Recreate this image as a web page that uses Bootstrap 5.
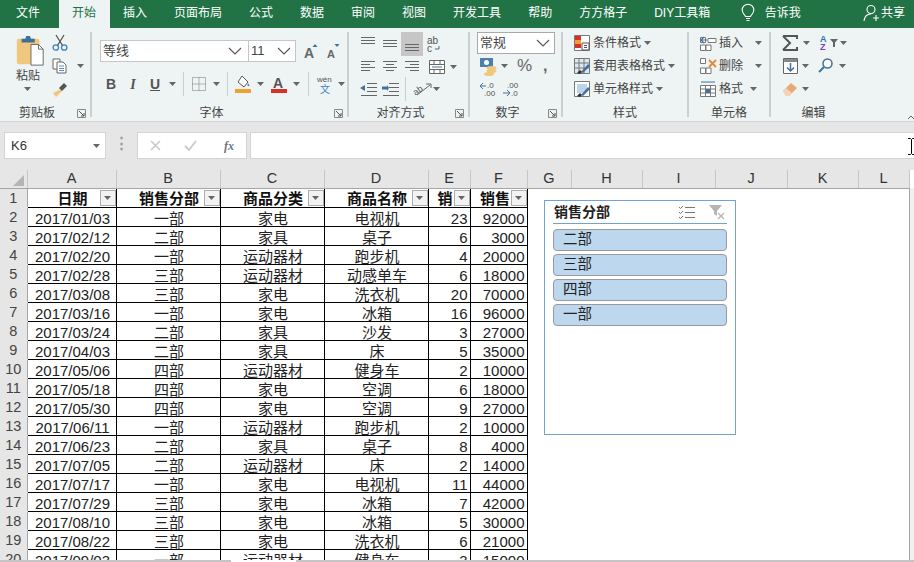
<!DOCTYPE html>
<html lang="zh">
<head>
<meta charset="utf-8">
<title>Excel</title>
<link href="https://cdn.jsdelivr.net/npm/bootstrap@5.3.0/dist/css/bootstrap.min.css" rel="stylesheet">
<style>
html,body{height:562px;overflow:hidden;background:#fff}
body{font-family:"Liberation Sans","Noto Sans CJK SC",sans-serif;font-size:12px;color:#444;width:914px}
svg{display:block;flex:none;overflow:visible}
.xl-tabs{height:28px;background:#217346;color:#fff;padding-left:2.5px}
.xl-tab{padding:0 13.5px;line-height:26px;color:#fff;white-space:nowrap}
.xl-tab.on{background:#eef3f3;color:#217346;margin-left:5px;width:51px;height:28px}
.xl-tell{margin-left:17px;width:106px;height:26px}
.xl-share{margin-left:auto;width:51px;padding-right:8px;height:26px}
.xl-ribbon{height:94px;background:#eef3f3;padding-top:4px;border-bottom:1px solid #d9d3d3;position:relative}
.xl-group{height:85px;border-right:2px solid #cbcfcf;flex:none}
.xl-body{height:74px}
.xl-label{height:12px;line-height:12px;text-align:center;color:#444;margin-top:1px}
.xl-launch{width:16px;padding-left:3px;padding-top:3px}
.g1{width:92px}.g2{width:257px}.g3{width:121px}.g4{width:93px}.g5{width:126px}.g6{width:82px}.g7{width:85px}
.pl8{padding-left:8px}.pl7{padding-left:7px}.pl11{padding-left:11px}
.xl-rows{display:flex;flex-direction:column}
.xl-rowh{height:23px;display:flex;align-items:center}
.up{margin-top:-1px}
.xl-box{height:22px;background:#fff;border:1px solid #c6c6c6;display:flex;align-items:center}
.fontbox{width:149px;padding:0 6px 0 2px;font-size:13px}
.sizebox{width:48px;padding:0 4px 0 2px;font-size:13px;margin-left:-1px}
.numbox{width:78px;padding:0 4px 0 2px;font-size:13px;border-color:#aaa}
.xl-g{width:22px;height:21px;display:flex;align-items:center;justify-content:center;flex:none}
.xl-g.act{background:#c6c6c6;height:24px}
.fw{font-family:"Liberation Serif",serif}
.txtb{font-weight:700;font-size:14px;color:#555}
.txti{font-style:italic;font-size:14px;color:#555;font-family:"Liberation Serif",serif;font-weight:700}
.txtu{font-weight:700;font-size:14px;color:#555;text-decoration:underline}
.vsep{width:1px;height:24px;background:#c9cdcd;flex:none}
.pt8{padding-top:8px}.mt10{margin-top:10px}.mt2{margin-top:2px}.mt5{margin-top:5px}
.s1{margin-left:1px}.s2{margin-left:2px}.s3{margin-left:3px}.s4{margin-left:4px}.s5{margin-left:5px}.s6{margin-left:6px}.s7{margin-left:7px}.s8{margin-left:8px}.s9{margin-left:9px}.s10{margin-left:10px}.s11{margin-left:11px}.s12{margin-left:12px}
.pct{font-size:17px;line-height:20px;color:#666;width:16px}
.cma{font-size:16px;font-weight:700;color:#666;line-height:16px}
.xl-paste{width:36px;padding-left:16px;box-sizing:content-box}
.xl-small{margin-left:-1px}
.xl-fx{height:48px;background:#e6e6e6;padding:10px 0 0 4px}
.xl-fbox{height:27px;background:#fff;border:1px solid #d4d4d4;display:flex;align-items:center;flex:none}
.namebox{width:102px;padding:0 5px 0 6px;font-size:13px;color:#333}
.dots{width:31px;color:#999;font-size:15px;text-align:center;font-weight:700}
.fxbox{width:110px;padding-left:12px;gap:23px}
.inbox{flex:1;margin-left:3px;border-right:0;position:relative}
.beam{position:absolute;right:-1px;top:5px}
.xl-sheet{height:390px;overflow:hidden;position:relative}
.xl-t{table-layout:fixed;border-collapse:collapse;width:909px;font-size:15px;color:#222}
.xl-t td,.xl-t th{height:19px;padding:0;line-height:15px;white-space:nowrap;overflow:hidden}
.c0{width:27px}.ca{width:89px}.cb,.cc,.cd{width:104px}.ce{width:42px}.cf{width:57px}.cg{width:44px}.ch{width:71px}.ci{width:73px}.cj{width:72px}.ck{width:71px}.cl{width:51px}
.xl-t .let{height:18px;line-height:17px;background:#e6e6e6;border-right:1px solid #c6c6c6;border-bottom:1px solid #a5a5a5;font-weight:400;text-align:center;color:#333;font-size:14.5px}
.xl-t .crn{height:18px;background:#e6e6e6;border-right:1px solid #c6c6c6;border-bottom:1px solid #a5a5a5;padding:3px 0 0 13px}
.xl-t .num{background:#e6e6e6;text-align:center;font-weight:400;color:#444;border-bottom:1px solid #e6e6e6;border-right:1px solid #a5a5a5;font-size:14.5px;padding-top:2px}
.xl-t .dat{border:1px solid #000;text-align:center;padding:3px 0 0 2px}
.xl-t .rt{text-align:right;padding:3px 2px 0 0}
.xl-t .hd{border:1px solid #000;font-weight:700;text-align:center;position:relative;color:#111;padding:2px 0 0 2px}
.xl-t .pad10{padding-right:10px}.xl-t .pad9{padding-right:9px}
.blank{background:#fff}
.flt{position:absolute;right:0;top:1px;width:16px;height:16px;background:#f2f2f2;border:1px solid #aeaeae;display:flex;align-items:center;justify-content:center}
.xl-foot{height:2px;background:#c4c4c4;position:relative}
.xl-foot i{display:block;width:65px;height:2px;background:#fff;margin-left:231px}
.xl-sb{position:absolute;left:909px;top:18px;width:5px;bottom:0;background:#f0f0f0;border-left:1px solid #a5a5a5}
.slicer{position:absolute;left:544px;top:30px;width:192px;height:235px;border:1px solid #6ea3d3;border-radius:0;background:#fff;padding:0 8px}
.sl-head{height:23px;border-bottom:1px solid #6ea3d3;font-weight:700;font-size:14px;color:#222;padding-left:1px}
.sl-list{margin-top:5px;gap:3px}
.sl-item{height:22px;background:#bdd7ee;border:1px solid #9a9a9a;border-radius:4px;font-size:14.5px;line-height:19px;color:#222;padding:0 0 0 9px;text-align:left}
.sl-icons{gap:14px;margin-right:2px}
.chev{position:absolute;right:0;bottom:2px}
</style>
</head>
<body>
<svg width="0" height="0" class="position-absolute">
<defs>
<symbol id="car" viewBox="0 0 7 4"><path d="M0 0h7L3.5 4z" fill="#666"/></symbol>
<symbol id="chv" viewBox="0 0 14 8"><path d="M1 1l6 6 6-6" fill="none" stroke="#555" stroke-width="1.1"/></symbol>
<symbol id="lau" viewBox="0 0 9 9"><path d="M.5 8.500v-8h8v8z" fill="none" stroke="#888"/><path d="M2 2l5 5M4 7h3V4" fill="none" stroke="#555"/></symbol>
</defs>
</svg>

<!-- tabs -->
<div class="xl-tabs d-flex align-items-start">
  <div class="xl-tab">文件</div><div class="xl-tab on">开始</div><div class="xl-tab">插入</div><div class="xl-tab">页面布局</div><div class="xl-tab">公式</div><div class="xl-tab">数据</div><div class="xl-tab">审阅</div><div class="xl-tab">视图</div><div class="xl-tab">开发工具</div><div class="xl-tab">帮助</div><div class="xl-tab">方方格子</div><div class="xl-tab">DIY工具箱</div>
  <div class="xl-tell d-flex align-items-center gap-2">
    <svg width="14" height="20" viewBox="0 0 14 20"><path d="M4.500 13.500C3 11 1.200 10 1.200 7a5.800 5.800 0 0 1 11.600 0c0 3-1.800 4-3.300 6.500z" fill="none" stroke="#fff" stroke-width="1.100"/><path d="M5 15.500h4M5.500 17.500h3" stroke="#fff" stroke-width="1.100"/></svg>
    <span class="xl-tab p-0 s2">告诉我</span>
  </div>
  <div class="xl-share d-flex align-items-center">
    <svg width="18" height="18" viewBox="0 0 18 18"><circle cx="8" cy="5.500" r="4" fill="none" stroke="#fff" stroke-width="1.100"/><path d="M1 17c.5-4 3-7 7-7M13 11v6M10 14h6" fill="none" stroke="#fff" stroke-width="1.100"/></svg>
    <span class="xl-tab p-0">共享</span>
  </div>
</div>

<!-- ribbon -->
<div class="xl-ribbon d-flex">
  <!-- clipboard -->
  <div class="xl-group g1">
    <div class="xl-body d-flex">
      <div class="xl-paste xl-rows align-items-start">
        <svg width="29" height="31" viewBox="0 0 29 33" class="mt-1"><rect x="0" y="3" width="24" height="27" rx="2" fill="#efc87d"/><path d="M5 3h4l1-3h4l1 3h4v4H5z" fill="#3f6f9b"/><path d="M15 9h8l5 5v17H15z" fill="#fff" stroke="#666"/><path d="M23 9v5h5" fill="none" stroke="#666"/></svg>
        <span>粘贴</span>
        <svg width="7" height="4" class="s8 mt2"><use href="#car"/></svg>
      </div>
      <div class="xl-small xl-rows">
        <div class="xl-rowh s1 up">
          <svg width="16" height="16" viewBox="0 0 16 16"><circle cx="3.800" cy="12.500" r="2.700" fill="none" stroke="#3f80c0" stroke-width="1.300"/><circle cx="12.200" cy="12.500" r="2.700" fill="none" stroke="#3f80c0" stroke-width="1.300"/><path d="M5.500 10.500L12 0M10.500 10.500L4 0" stroke="#555" stroke-width="1.300"/></svg>
        </div>
        <div class="xl-rowh s1">
          <svg width="16" height="15" viewBox="0 0 16 15"><path d="M1 1h7v10H1z" fill="#fff" stroke="#666"/><path d="M5 4h6l3 3v8H5z" fill="#fff" stroke="#666"/><path d="M7 8h5M7 10.500h5M7 12.500h5" stroke="#5a8ab5"/></svg>
          <svg width="7" height="4" class="s9"><use href="#car"/></svg>
        </div>
        <div class="xl-rowh s1">
          <svg width="16" height="16" viewBox="0 0 16 16"><path d="M9 8L1 12l3 4 6-6z" fill="#efc87d"/><path d="M8 6l4-4 3 3-4 4-1 1-3-3z" fill="#555"/></svg>
        </div>
      </div>
    </div>
    <div class="d-flex"><div class="xl-label flex-grow-1">剪贴板</div><div class="xl-launch"><svg width="9" height="9"><use href="#lau"/></svg></div></div>
  </div>

  <!-- font -->
  <div class="xl-group g2">
    <div class="xl-body pl8 pt8">
      <div class="d-flex align-items-center">
        <div class="xl-box fontbox justify-content-between"><span>等线</span><svg width="14" height="8"><use href="#chv"/></svg></div>
        <div class="xl-box sizebox justify-content-between"><span>11</span><svg width="14" height="8"><use href="#chv"/></svg></div>
        <svg width="16" height="16" viewBox="0 0 16 16" class="s8"><path d="M11 1l2.500 3h-5z" fill="#41719c"/><text x="0" y="15" font-size="14" font-family="Liberation Sans" font-weight="700" fill="#666">A</text></svg>
        <svg width="16" height="16" viewBox="0 0 16 16" class="s6"><path d="M11 4L8.500 1h5z" fill="#41719c"/><text x="1" y="15" font-size="11" font-family="Liberation Sans" font-weight="700" fill="#666">A</text></svg>
      </div>
      <div class="d-flex align-items-center mt10">
        <div class="xl-g txtb">B</div><div class="xl-g txti">I</div><div class="xl-g txtu">U</div>
        <svg width="7" height="4" class="s3"><use href="#car"/></svg>
        <div class="vsep s7"></div>
        <svg width="14" height="14" viewBox="0 0 14 14" class="s8"><path d="M.5.500h13v13H.5zM7 .5v13M.5 7h13" fill="none" stroke="#777" stroke-dasharray="1 1"/></svg>
        <svg width="7" height="4" class="s7"><use href="#car"/></svg>
        <div class="vsep s7"></div>
        <svg width="17" height="18" viewBox="0 0 17 18" class="s7"><path d="M7 1l6 6-4 5-6-5z" fill="#fff" stroke="#555"/><path d="M13 8l1.500 3-2 0z" fill="#41719c"/><rect y="14" width="16" height="4" fill="#f0a030"/></svg>
        <svg width="7" height="4" class="s5"><use href="#car"/></svg>
        <svg width="17" height="18" viewBox="0 0 17 18" class="s7"><text x="2" y="13" font-size="14" font-family="Liberation Sans" font-weight="700" fill="#555">A</text><rect y="14" width="16" height="4" fill="#d9302a"/></svg>
        <svg width="7" height="4" class="s5"><use href="#car"/></svg>
        <div class="vsep s8"></div>
        <svg width="17" height="19" viewBox="0 0 17 19" class="s8"><text x="0" y="7" font-size="8" font-family="Liberation Sans" fill="#555">wén</text><text x="3" y="18" font-size="10" font-family="Noto Sans CJK SC" fill="#3f80c0">文</text></svg>
        <svg width="7" height="4" class="s4"><use href="#car"/></svg>
      </div>
    </div>
    <div class="d-flex"><div class="xl-label flex-grow-1">字体</div><div class="xl-launch"><svg width="9" height="9"><use href="#lau"/></svg></div></div>
  </div>

  <!-- alignment -->
  <div class="xl-group g3">
    <div class="xl-body pl8">
      <div class="d-flex align-items-center">
        <div class="xl-g act bg-transparent"><svg width="15" height="16" viewBox="0 0 15 16"><path d="M0 1.500h14M0 4.500h14M0 7.500h14" stroke="#666"/></svg></div>
        <div class="xl-g act bg-transparent"><svg width="15" height="12" viewBox="0 0 15 12"><path d="M0 2.500h14M0 5.500h14M0 8.500h14" stroke="#666"/></svg></div>
        <div class="xl-g act"><svg width="15" height="16" viewBox="0 0 15 16"><path d="M0 8.500h14M0 11.500h14M0 14.500h14" stroke="#666"/></svg></div>
        <div class="xl-g act bg-transparent"><svg width="16" height="17" viewBox="0 0 16 17"><text x="1" y="8" font-size="10" font-family="Liberation Sans" fill="#555">ab</text><text x="1" y="16" font-size="10" font-family="Liberation Sans" fill="#555">c</text><path d="M13 10v3H9" fill="none" stroke="#41719c"/></svg></div>
      </div>
      <div class="d-flex align-items-center">
        <div class="xl-g"><svg width="15" height="11" viewBox="0 0 15 11"><path d="M0 .500h14M0 3.500h9M0 6.500h14M0 9.500h9" stroke="#666"/></svg></div>
        <div class="xl-g"><svg width="15" height="11" viewBox="0 0 15 11"><path d="M0 .500h14M3 3.500h8M0 6.500h14M3 9.500h8" stroke="#666"/></svg></div>
        <div class="xl-g"><svg width="15" height="11" viewBox="0 0 15 11"><path d="M0 .500h14M5 3.500h9M0 6.500h14M5 9.500h9" stroke="#666"/></svg></div>
        <svg width="16" height="14" viewBox="0 0 16 14" class="s6"><path d="M.5.500h15v13H.5zM.5 4.500h15M.5 9.500h15M5 .5v4M11 .5v4M5 9.500v4M11 9.500v4" fill="#fff" stroke="#666"/><path d="M3 7h10" stroke="#41719c"/></svg>
        <svg width="7" height="4" class="s5"><use href="#car"/></svg>
      </div>
      <div class="d-flex align-items-center">
        <div class="xl-g"><svg width="17" height="13" viewBox="0 0 17 13"><path d="M7 .5h10M7 4.500h10M7 8.500h10M1 12.500h16" stroke="#666"/><path d="M5 2v6L0 5z" fill="#41719c"/></svg></div>
        <div class="xl-g"><svg width="17" height="13" viewBox="0 0 17 13"><path d="M7 .5h10M7 4.500h10M7 8.500h10M1 12.500h16" stroke="#666"/><path d="M0 3.500h5V2l2 3-2 3V6.500H0z" fill="#41719c"/></svg></div>
        <div class="vsep s4"></div>
        <svg width="19" height="16" viewBox="0 0 19 16" class="s6"><text x="0" y="12" font-size="9" font-family="Liberation Sans" fill="#555" transform="rotate(-35 6 8)">ab</text><path d="M5 14L18 4M14 3h5v4" fill="none" stroke="#666"/></svg>
        <svg width="7" height="4" class="s2"><use href="#car"/></svg>
      </div>
    </div>
    <div class="d-flex"><div class="xl-label flex-grow-1">对齐方式</div><div class="xl-launch"><svg width="9" height="9"><use href="#lau"/></svg></div></div>
  </div>

  <!-- number -->
  <div class="xl-group g4">
    <div class="xl-body pl7">
      <div class="xl-box numbox justify-content-between"><span>常规</span><svg width="14" height="8"><use href="#chv"/></svg></div>
      <div class="d-flex align-items-center mt2">
        <svg width="17" height="19" viewBox="0 0 17 19" class="s3"><rect x="0" y="1" width="13" height="9" fill="#4a7fb0"/><circle cx="6.500" cy="5.500" r="2.500" fill="#fff"/><ellipse cx="11.500" cy="11" rx="5" ry="2" fill="#efc87d"/><ellipse cx="11.500" cy="14" rx="5" ry="2" fill="#efc87d"/><ellipse cx="9" cy="17" rx="5" ry="2" fill="#efc87d"/></svg>
        <svg width="7" height="4" class="s4"><use href="#car"/></svg>
        <span class="pct s9">%</span>
        <span class="cma s10">,</span>
      </div>
      <div class="d-flex align-items-center mt5">
        <svg width="16" height="16" viewBox="0 0 16 16" class="s3"><text x="7" y="7" font-size="8" font-family="Liberation Sans" fill="#555">.0</text><text x="4" y="15" font-size="8" font-family="Liberation Sans" fill="#555">.00</text><path d="M0 5h6M3 2L0 5l3 3" fill="none" stroke="#41719c"/></svg>
        <svg width="16" height="16" viewBox="0 0 16 16" class="s7"><text x="4" y="7" font-size="8" font-family="Liberation Sans" fill="#555">.00</text><text x="8" y="15" font-size="8" font-family="Liberation Sans" fill="#555">.0</text><path d="M0 12h6M4 9l3 3-3 3" fill="none" stroke="#41719c"/></svg>
      </div>
    </div>
    <div class="d-flex"><div class="xl-label flex-grow-1">数字</div><div class="xl-launch"><svg width="9" height="9"><use href="#lau"/></svg></div></div>
  </div>

  <!-- styles -->
  <div class="xl-group g5">
    <div class="xl-body xl-rows pl11">
      <div class="xl-rowh up">
        <svg width="16" height="16" viewBox="0 0 16 16"><path d="M.5.500h15v15H.5z" fill="#fff" stroke="#777"/><path d="M1 1h6v4H1zM1 9h6v4H1z" fill="#d9302a"/><path d="M1 5h6v4H1z" fill="#f0a030"/><path d="M8 8h7v7H8z" fill="#fff" stroke="#555"/><path d="M10 10.500h3M10 12.500h3" stroke="#555"/></svg>
        <span class="s3">条件格式</span><svg width="7" height="4" class="s3"><use href="#car"/></svg>
      </div>
      <div class="xl-rowh">
        <svg width="16" height="16" viewBox="0 0 16 16"><path d="M.5.500h15v15H.5zM.5 5h15M.5 10h15M5 .5v15M10 .5v15" fill="#dbe7f1" stroke="#777"/><path d="M7 14l7-8 2 2-7 7z" fill="#41719c"/><path d="M3 15l3-3 2 2-2 2z" fill="#333"/></svg>
        <span class="s3">套用表格格式</span><svg width="7" height="4" class="s3"><use href="#car"/></svg>
      </div>
      <div class="xl-rowh">
        <svg width="16" height="16" viewBox="0 0 16 16"><path d="M.5.500h15v15H.5z" fill="#fff" stroke="#777"/><path d="M3 3h10v9H3z" fill="#bcd4ea"/><path d="M7 14l7-8 2 2-7 7z" fill="#41719c"/><path d="M3 15l3-3 2 2-2 2z" fill="#333"/></svg>
        <span class="s3">单元格样式</span><svg width="7" height="4" class="s3"><use href="#car"/></svg>
      </div>
    </div>
    <div class="xl-label">样式</div>
  </div>

  <!-- cells -->
  <div class="xl-group g6">
    <div class="xl-body xl-rows pl11">
      <div class="xl-rowh up">
        <svg width="17" height="16" viewBox="0 0 17 16"><path d="M.5 2.500h5v5h-5zM.5 10h5v5.500h-5zM6 10h5v5.500H6zM8 3.500h8v4H8z" fill="#fff" stroke="#777"/><path d="M1 5h6M4 2L1 5l3 3" fill="none" stroke="#41719c" stroke-width="1.200"/></svg>
        <span class="s2">插入</span><svg width="7" height="4" class="s12"><use href="#car"/></svg>
      </div>
      <div class="xl-rowh">
        <svg width="17" height="16" viewBox="0 0 17 16"><path d="M.5 .5h5v5h-5zM.5 10h5v5.500h-5zM6 10h5v5.500H6z" fill="#fff" stroke="#777"/><path d="M9 2l7 7M16 2L9 9" stroke="#e08a3c" stroke-width="1.800"/></svg>
        <span class="s2">删除</span><svg width="7" height="4" class="s12"><use href="#car"/></svg>
      </div>
      <div class="xl-rowh">
        <svg width="17" height="16" viewBox="0 0 17 16"><path d="M1 1h14" stroke="#41719c"/><path d="M.5 4.500h15v11H.5zM.5 8h15M.5 12h15M5.500 4.500v11M10.500 4.500v11" fill="#fff" stroke="#777"/><rect x="6" y="8" width="4" height="4" fill="#41719c"/></svg>
        <span class="s2">格式</span><svg width="7" height="4" class="s7"><use href="#car"/></svg>
      </div>
    </div>
    <div class="xl-label">单元格</div>
  </div>

  <!-- editing -->
  <div class="xl-group g7 border-0">
    <div class="xl-body xl-rows pl11">
      <div class="xl-rowh up">
        <svg width="16" height="16" viewBox="0 0 16 16"><path d="M1 1h14v3M1 15h14v-3M1 1l7 7-7 7" fill="none" stroke="#555" stroke-width="2"/></svg>
        <svg width="7" height="4" class="s5"><use href="#car"/></svg>
        <svg width="20" height="17" viewBox="0 0 20 17" class="s9"><text x="1" y="8" font-size="9" font-family="Liberation Sans" font-weight="700" fill="#2e75b6">A</text><text x="1" y="16" font-size="9" font-family="Liberation Sans" font-weight="700" fill="#7e3fc0">Z</text><path d="M11 5h8l-3 3.500V13h-2V8.500z" fill="#666"/></svg>
        <svg width="7" height="4" class="s1"><use href="#car"/></svg>
      </div>
      <div class="xl-rowh">
        <svg width="15" height="16" class="s1" viewBox="0 0 15 16"><path d="M.5.500h14v15H.5z" fill="#fff" stroke="#666"/><path d="M1 1h13v3H1z" fill="#888"/><path d="M7.500 5v8M4 9.500l3.500 3.500L11 9.500" fill="none" stroke="#41719c" stroke-width="1.500"/></svg>
        <svg width="7" height="4" class="s4"><use href="#car"/></svg>
        <svg width="15" height="15" viewBox="0 0 15 15" class="s9"><circle cx="9.500" cy="5.500" r="4.500" fill="#fff" stroke="#41719c" stroke-width="1.500"/><path d="M6 9l-5 5" stroke="#41719c" stroke-width="2"/></svg>
        <svg width="7" height="4" class="s6"><use href="#car"/></svg>
      </div>
      <div class="xl-rowh">
        <svg width="15" height="14" class="s1" viewBox="0 0 15 14"><path d="M0 9l8-8 6 5-8 8H3z" fill="#e8a878"/><path d="M0 9l3-3 6 5-3 3H3z" fill="#f5d3b8"/></svg>
        <svg width="7" height="4" class="s4"><use href="#car"/></svg>
      </div>
    </div>
    <div class="xl-label">编辑</div>
  </div>
  <svg class="chev" width="6" height="4" viewBox="0 0 6 4"><path d="M0 4l3-3 3 3" fill="none" stroke="#666"/></svg>
</div>

<!-- formula bar -->
<div class="xl-fx d-flex">
  <div class="xl-fbox namebox justify-content-between"><span>K6</span><svg width="7" height="4"><use href="#car"/></svg></div>
  <div class="dots">⋮</div>
  <div class="xl-fbox fxbox">
    <svg width="11" height="11" viewBox="0 0 11 11"><path d="M1 1l9 9M10 1l-9 9" stroke="#c8c8c8" stroke-width="1.500"/></svg>
    <svg width="13" height="11" viewBox="0 0 13 11"><path d="M1 6l4 4 7-9" fill="none" stroke="#c8c8c8" stroke-width="1.800"/></svg>
    <span class="fw fst-italic fw-bold text-secondary s4">fx</span>
  </div>
  <div class="xl-fbox inbox">
    <svg class="beam" width="7" height="17" viewBox="0 0 7 17"><path d="M0 .5h2.500L3.500 1.500 4.500.5H7M3.500 1.500v14M0 16.500h2.500l1-1 1 1H7" fill="none" stroke="#000"/></svg>
  </div>
</div>

<!-- sheet -->
<div class="xl-sheet">
<table class="xl-t">
<colgroup><col class="c0"><col class="ca"><col class="cb"><col class="cc"><col class="cd"><col class="ce"><col class="cf"><col class="cg"><col class="ch"><col class="ci"><col class="cj"><col class="ck"><col class="cl"></colgroup>
<thead><tr><th class="crn"><svg width="11" height="11" viewBox="0 0 11 11"><path d="M11 0v11H0z" fill="#b4b4b4"/></svg></th><th class="let">A</th><th class="let">B</th><th class="let">C</th><th class="let">D</th><th class="let">E</th><th class="let">F</th><th class="let">G</th><th class="let">H</th><th class="let">I</th><th class="let">J</th><th class="let">K</th><th class="let">L</th></tr></thead>
<tbody>
<tr><th class="num">1</th><th class="hd">日期<span class="flt"><svg width="7" height="4"><use href="#car"/></svg></span></th><th class="hd">销售分部<span class="flt"><svg width="7" height="4"><use href="#car"/></svg></span></th><th class="hd">商品分类<span class="flt"><svg width="7" height="4"><use href="#car"/></svg></span></th><th class="hd">商品名称<span class="flt"><svg width="7" height="4"><use href="#car"/></svg></span></th><th class="hd pad10">销<span class="flt"><svg width="7" height="4"><use href="#car"/></svg></span></th><th class="hd pad9">销售<span class="flt"><svg width="7" height="4"><use href="#car"/></svg></span></th><td class="blank" rowspan="20" colspan="6"></td></tr>
<tr><th class="num">2</th><td class="dat">2017/01/03</td><td class="dat">一部</td><td class="dat">家电</td><td class="dat">电视机</td><td class="dat rt">23</td><td class="dat rt">92000</td></tr>
<tr><th class="num">3</th><td class="dat">2017/02/12</td><td class="dat">二部</td><td class="dat">家具</td><td class="dat">桌子</td><td class="dat rt">6</td><td class="dat rt">3000</td></tr>
<tr><th class="num">4</th><td class="dat">2017/02/20</td><td class="dat">一部</td><td class="dat">运动器材</td><td class="dat">跑步机</td><td class="dat rt">4</td><td class="dat rt">20000</td></tr>
<tr><th class="num">5</th><td class="dat">2017/02/28</td><td class="dat">三部</td><td class="dat">运动器材</td><td class="dat">动感单车</td><td class="dat rt">6</td><td class="dat rt">18000</td></tr>
<tr><th class="num">6</th><td class="dat">2017/03/08</td><td class="dat">三部</td><td class="dat">家电</td><td class="dat">洗衣机</td><td class="dat rt">20</td><td class="dat rt">70000</td></tr>
<tr><th class="num">7</th><td class="dat">2017/03/16</td><td class="dat">一部</td><td class="dat">家电</td><td class="dat">冰箱</td><td class="dat rt">16</td><td class="dat rt">96000</td></tr>
<tr><th class="num">8</th><td class="dat">2017/03/24</td><td class="dat">二部</td><td class="dat">家具</td><td class="dat">沙发</td><td class="dat rt">3</td><td class="dat rt">27000</td></tr>
<tr><th class="num">9</th><td class="dat">2017/04/03</td><td class="dat">二部</td><td class="dat">家具</td><td class="dat">床</td><td class="dat rt">5</td><td class="dat rt">35000</td></tr>
<tr><th class="num">10</th><td class="dat">2017/05/06</td><td class="dat">四部</td><td class="dat">运动器材</td><td class="dat">健身车</td><td class="dat rt">2</td><td class="dat rt">10000</td></tr>
<tr><th class="num">11</th><td class="dat">2017/05/18</td><td class="dat">四部</td><td class="dat">家电</td><td class="dat">空调</td><td class="dat rt">6</td><td class="dat rt">18000</td></tr>
<tr><th class="num">12</th><td class="dat">2017/05/30</td><td class="dat">四部</td><td class="dat">家电</td><td class="dat">空调</td><td class="dat rt">9</td><td class="dat rt">27000</td></tr>
<tr><th class="num">13</th><td class="dat">2017/06/11</td><td class="dat">一部</td><td class="dat">运动器材</td><td class="dat">跑步机</td><td class="dat rt">2</td><td class="dat rt">10000</td></tr>
<tr><th class="num">14</th><td class="dat">2017/06/23</td><td class="dat">二部</td><td class="dat">家具</td><td class="dat">桌子</td><td class="dat rt">8</td><td class="dat rt">4000</td></tr>
<tr><th class="num">15</th><td class="dat">2017/07/05</td><td class="dat">二部</td><td class="dat">运动器材</td><td class="dat">床</td><td class="dat rt">2</td><td class="dat rt">14000</td></tr>
<tr><th class="num">16</th><td class="dat">2017/07/17</td><td class="dat">一部</td><td class="dat">家电</td><td class="dat">电视机</td><td class="dat rt">11</td><td class="dat rt">44000</td></tr>
<tr><th class="num">17</th><td class="dat">2017/07/29</td><td class="dat">三部</td><td class="dat">家电</td><td class="dat">冰箱</td><td class="dat rt">7</td><td class="dat rt">42000</td></tr>
<tr><th class="num">18</th><td class="dat">2017/08/10</td><td class="dat">三部</td><td class="dat">家电</td><td class="dat">冰箱</td><td class="dat rt">5</td><td class="dat rt">30000</td></tr>
<tr><th class="num">19</th><td class="dat">2017/08/22</td><td class="dat">三部</td><td class="dat">家电</td><td class="dat">洗衣机</td><td class="dat rt">6</td><td class="dat rt">21000</td></tr>
<tr><th class="num">20</th><td class="dat">2017/09/03</td><td class="dat">一部</td><td class="dat">运动器材</td><td class="dat">健身车</td><td class="dat rt">3</td><td class="dat rt">15000</td></tr>
</tbody>
</table>
<div class="xl-sb"></div>
<div class="slicer card">
  <div class="sl-head d-flex align-items-center justify-content-between">
    <span>销售分部</span>
    <span class="sl-icons d-flex align-items-center">
      <svg width="17" height="14" viewBox="0 0 17 14"><path d="M1 2l1.500 1.500L5 1M1 7l1.500 1.500L5 6M1 12l1.500 1.500L5 11" fill="none" stroke="#777"/><path d="M7 2.500h10M7 7.500h10M7 12.500h10" stroke="#777"/></svg>
      <svg width="16" height="15" viewBox="0 0 16 15"><path d="M0 0h13L8 6v5L5 9V6z" fill="#b5b5b5"/><path d="M9 8l6 6M15 8l-6 6" stroke="#b5b5b5" stroke-width="1.300"/></svg>
    </span>
  </div>
  <div class="sl-list d-flex flex-column">
    <div class="sl-item">二部</div>
    <div class="sl-item">三部</div>
    <div class="sl-item">四部</div>
    <div class="sl-item">一部</div>
  </div>
</div>
</div>
<div class="xl-foot"><i></i></div>
<script src="https://cdn.jsdelivr.net/npm/bootstrap@5.3.0/dist/js/bootstrap.bundle.min.js"></script>
</body>
</html>
